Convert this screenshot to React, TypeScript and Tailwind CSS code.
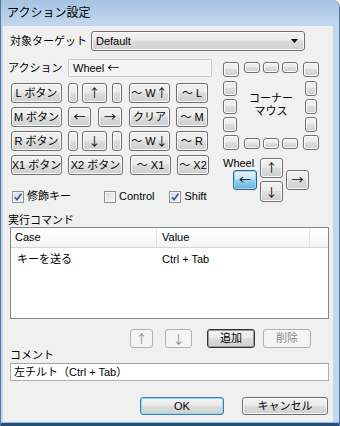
import type { ReactNode } from "react";

const BTN = {
  normal:
    "border border-[#707070] bg-[linear-gradient(#f2f2f2_0%,#ebebeb_45%,#dddddd_50%,#cfcfcf_100%)] shadow-[inset_0_0_0_1px_#fbfbfb] text-black",
  disabled: "border border-[#adb2b5] bg-[#f4f4f4] text-[#8a8a8a]",
  pressed:
    "border border-[#2c628b] bg-[linear-gradient(#e5f4fc_0%,#c4e5f6_45%,#98d1ef_50%,#68b3db_100%)] shadow-[inset_0_0_0_1px_#9ed6f2] text-black",
  focus:
    "border border-[#333333] bg-[linear-gradient(#f2f2f2_0%,#ebebeb_45%,#dddddd_50%,#cfcfcf_100%)] shadow-[inset_0_0_0_1px_#9a9a9a] text-black",
  default:
    "border border-[#3c7fb1] bg-[linear-gradient(#f2f2f2_0%,#ebebeb_45%,#dddddd_50%,#cfcfcf_100%)] shadow-[inset_0_0_0_1px_#8fdcf8] text-black",
};

function Btn({
  children,
  className = "",
  v = "normal",
}: {
  children?: ReactNode;
  className?: string;
  v?: keyof typeof BTN;
}) {
  return (
    <div
      className={`flex shrink-0 items-center justify-center rounded-[3px] leading-none whitespace-nowrap ${BTN[v]} ${className}`}
    >
      {children}
    </div>
  );
}

// arrows need the CJK face, Liberation draws them tiny
function Ar({ c }: { c: string }) {
  return <span className="font-['Noto_Sans_CJK_JP',sans-serif] text-[12px] leading-none">{c}</span>;
}

function Check({ checked }: { checked?: boolean }) {
  return (
    <span className="flex h-[12px] w-[12px] shrink-0 border border-[#8e8f8f] bg-[linear-gradient(135deg,#d3d6db,#fbfbfb)] shadow-[inset_0_0_0_1px_#f7f7f7]">
      {checked && (
        <svg viewBox="0 0 10 10" className="h-full w-full">
          <path d="M1.8 5.2 L4 7.6 L8.4 1.8" fill="none" stroke="#3a57a3" strokeWidth="1.7" />
        </svg>
      )}
    </span>
  );
}

export default function App() {
  return (
    <div className="h-[426px] w-[340px] overflow-hidden bg-white font-['Liberation_Sans','Noto_Sans_CJK_JP',sans-serif] text-[11px] text-black">
      <div className="flex h-full flex-col rounded-tr-[7px] border-l border-r border-[#5877a0] bg-[#c2d7ee]">
        {/* title bar */}
        <div className="flex h-[26px] shrink-0 items-center rounded-tr-[7px] bg-[linear-gradient(#a6c2e2,#c3d8ee)] pl-[6px] text-[12px]">
          アクション設定
        </div>

        <div className="flex min-h-0 flex-1">
          <div className="w-[2px] shrink-0" />
          <div className="flex w-[330px] shrink-0 flex-col bg-[#f0f0f0]">
            {/* target */}
            <div className="mt-[5px] flex h-[20px] items-center">
              <span className="ml-[7px] w-[81px]">対象ターゲット</span>
              <div className="flex h-[20px] w-[214px] items-center justify-between rounded-[3px] border border-[#707070] bg-[linear-gradient(#f2f2f2_0%,#ebebeb_45%,#dddddd_50%,#cfcfcf_100%)] pl-[4px] pr-[6px] shadow-[inset_0_0_0_1px_#fbfbfb]">
                <span>Default</span>
                <svg viewBox="0 0 7 4" className="h-[4px] w-[7px]">
                  <path d="M0 0 H7 L3.5 4 Z" fill="#000" />
                </svg>
              </div>
            </div>

            {/* action area */}
            <div className="mt-[8px] flex">
              <div className="flex w-[217px] shrink-0 flex-col">
                <div className="flex h-[18px] items-center">
                  <span className="ml-[5px] w-[60px]">アクション</span>
                  <div className="flex h-[18px] w-[144px] items-center gap-[3px] border border-[#c8cbd0] bg-[#f4f4f4] pl-[4px]">
                    Wheel <Ar c="←" />
                  </div>
                </div>

                <div className="ml-[8px] mt-[6px] flex flex-col gap-[4px]">
                  <div className="flex h-[20px]">
                    <Btn className="w-[51px]">L ボタン</Btn>
                    <Btn className="ml-[6px] w-[10px]" />
                    <Btn className="ml-[4px] w-[25px]"><Ar c="↑" /></Btn>
                    <Btn className="ml-[5px] w-[10px]" />
                    <Btn className="ml-[7px] w-[41px]">～ W<Ar c="↑" /></Btn>
                    <Btn className="ml-[6px] w-[32px]">～ L</Btn>
                  </div>
                  <div className="flex h-[20px]">
                    <Btn className="w-[51px]">M ボタン</Btn>
                    <Btn className="ml-[6px] w-[23px]"><Ar c="←" /></Btn>
                    <Btn className="ml-[7px] w-[24px]"><Ar c="→" /></Btn>
                    <Btn className="ml-[7px] w-[41px]">クリア</Btn>
                    <Btn className="ml-[6px] w-[32px]">～ M</Btn>
                  </div>
                  <div className="flex h-[20px]">
                    <Btn className="w-[51px]">R ボタン</Btn>
                    <Btn className="ml-[6px] w-[10px]" />
                    <Btn className="ml-[4px] w-[25px]"><Ar c="↓" /></Btn>
                    <Btn className="ml-[5px] w-[10px]" />
                    <Btn className="ml-[7px] w-[41px]">～ W<Ar c="↓" /></Btn>
                    <Btn className="ml-[6px] w-[32px]">～ R</Btn>
                  </div>
                  <div className="flex h-[20px]">
                    <Btn className="w-[51px]">X1 ボタン</Btn>
                    <Btn className="ml-[6px] w-[55px]">X2 ボタン</Btn>
                    <Btn className="ml-[7px] w-[41px]">～ X1</Btn>
                    <Btn className="ml-[6px] w-[32px]">～ X2</Btn>
                  </div>
                </div>

                <div className="mt-[15px] flex h-[13px] items-center">
                  <span className="ml-[9px] flex items-center gap-[3px]">
                    <Check checked />
                    修飾キー
                  </span>
                  <span className="ml-[33px] flex items-center gap-[3px]">
                    <Check />
                    Control
                  </span>
                  <span className="ml-[15px] flex items-center gap-[3px]">
                    <Check checked />
                    Shift
                  </span>
                </div>
              </div>

              {/* corner mouse + wheel */}
              <div className="ml-[3px] flex flex-col pt-[3px]">
                <div className="grid h-[88px] w-[96px] grid-cols-[16px_64px_16px] grid-rows-[15px_58px_15px]">
                  <Btn className="h-[15px] w-[16px]" />
                  <div className="flex justify-center gap-[3px]">
                    <Btn className="h-[11px] w-[16px]" />
                    <Btn className="h-[11px] w-[16px]" />
                    <Btn className="h-[11px] w-[16px]" />
                  </div>
                  <Btn className="h-[15px] w-[16px]" />
                  <div className="flex flex-col justify-center gap-[3px]">
                    <Btn className="h-[15px] w-[14px]" />
                    <Btn className="h-[15px] w-[14px]" />
                    <Btn className="h-[15px] w-[14px]" />
                  </div>
                  <div className="flex flex-col items-center justify-center pb-[2px] leading-[13px]">
                    <span>コーナー</span>
                    <span>マウス</span>
                  </div>
                  <div className="flex flex-col items-end justify-center gap-[3px] pr-[2px]">
                    <Btn className="h-[15px] w-[12px]" />
                    <Btn className="h-[15px] w-[12px]" />
                    <Btn className="h-[15px] w-[12px]" />
                  </div>
                  <Btn className="h-[15px] w-[16px]" />
                  <div className="flex items-end justify-center gap-[3px] pb-[1px]">
                    <Btn className="h-[11px] w-[16px]" />
                    <Btn className="h-[11px] w-[16px]" />
                    <Btn className="h-[11px] w-[16px]" />
                  </div>
                  <Btn className="h-[15px] w-[16px]" />
                </div>

                <div className="mt-[8px] flex">
                  <div className="flex w-[34px] flex-col">
                    <span className="-mt-[2px] h-[14px] leading-[14px]">Wheel</span>
                    <Btn v="pressed" className="ml-[10px] h-[20px] w-[24px]">
                      <Ar c="←" />
                    </Btn>
                  </div>
                  <div className="ml-[3px] flex flex-col gap-[3px]">
                    <Btn className="h-[20px] w-[23px]"><Ar c="↑" /></Btn>
                    <Btn className="h-[21px] w-[23px]"><Ar c="↓" /></Btn>
                  </div>
                  <Btn className="ml-[3px] mt-[12px] h-[20px] w-[23px]"><Ar c="→" /></Btn>
                </div>
              </div>
            </div>

            {/* command list */}
            <div className="ml-[5px] mt-[10px] h-[14px] leading-[14px]">実行コマンド</div>
            <div className="ml-[7px] flex h-[92px] w-[319px] flex-col border border-[#828790] bg-white">
              <div className="flex h-[20px] border-b border-[#d5d5d5] bg-[linear-gradient(#ffffff,#f3f4f6)]">
                <div className="flex w-[146px] items-center border-r border-[#e3e4e6] pl-[4px]">Case</div>
                <div className="flex w-[153px] items-center border-r border-[#e3e4e6] pl-[5px]">Value</div>
                <div className="flex-1" />
              </div>
              <div className="mt-[3px] flex h-[17px] items-center">
                <span className="w-[146px] pl-[6px]">キーを送る</span>
                <span className="pl-[5px]">Ctrl + Tab</span>
              </div>
            </div>

            <div className="mt-[10px] flex h-[19px]">
              <Btn v="disabled" className="ml-[127px] w-[23px]"><Ar c="↑" /></Btn>
              <Btn v="disabled" className="ml-[12px] w-[27px]"><Ar c="↓" /></Btn>
              <Btn v="focus" className="ml-[15px] w-[48px]">追加</Btn>
              <Btn v="disabled" className="ml-[8px] w-[48px]">削除</Btn>
            </div>

            <div className="ml-[7px] h-[15px] leading-[15px]">コメント</div>
            <div className="ml-[7px] flex h-[18px] w-[319px] items-center border border-[#abadb3] border-t-[#a0a4ab] bg-white pl-[3px]">
              左チルト（Ctrl + Tab）
            </div>

            <div className="mt-[16px] flex h-[18px]">
              <Btn v="default" className="ml-[137px] w-[84px]">OK</Btn>
              <Btn className="ml-[18px] w-[86px]">キャンセル</Btn>
            </div>
          </div>
          <div className="flex-1" />
        </div>
        <div className="h-[1px] shrink-0 bg-[#6fcdef]" />
        <div className="h-[3px] shrink-0 bg-[#2d4c74]" />
      </div>
    </div>
  );
}
